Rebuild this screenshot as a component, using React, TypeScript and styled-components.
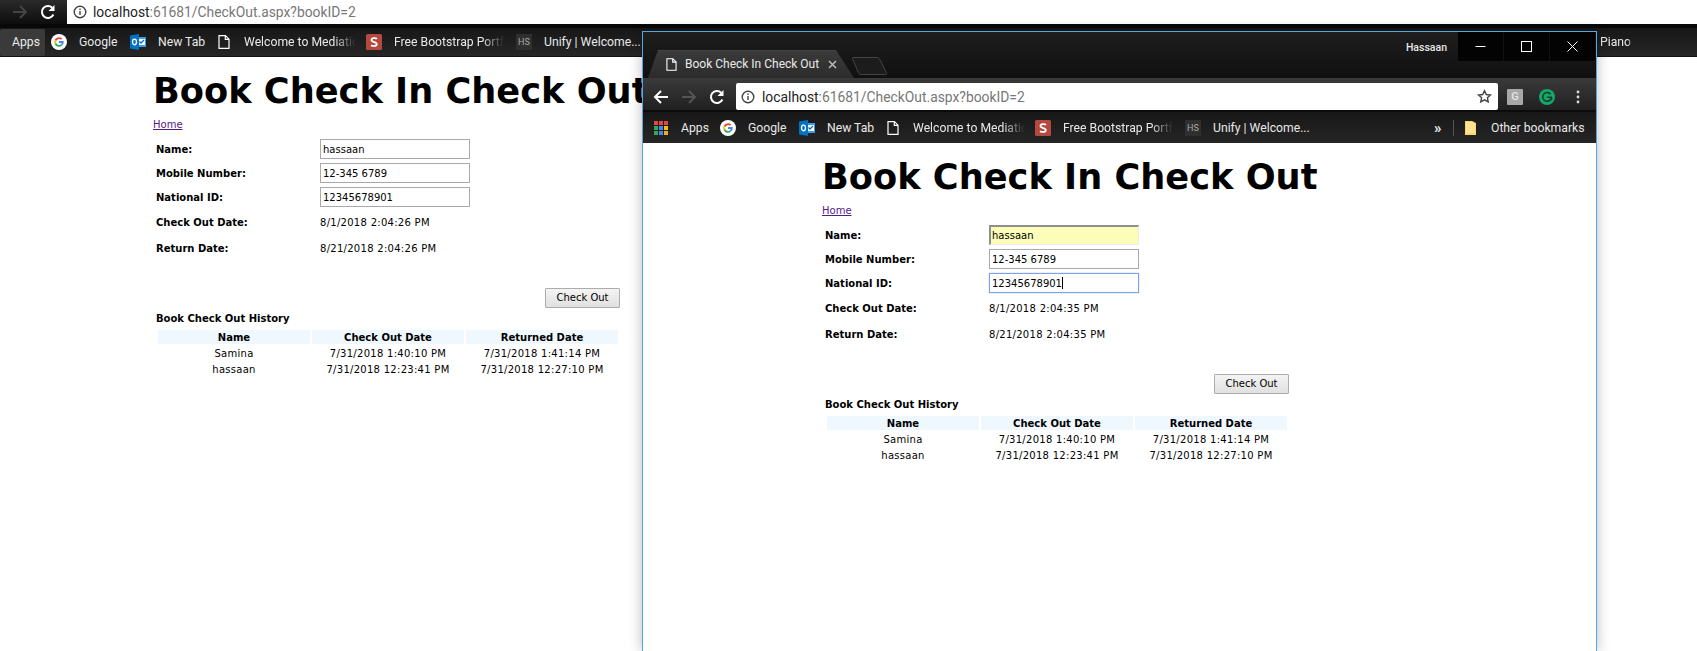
import React from "react";
import styled, { createGlobalStyle, css } from "styled-components";

const Global = createGlobalStyle`
  html, body { margin: 0; padding: 0; background: #fff; overflow: hidden; }
  #root { width: 1697px; height: 651px; }
`;

const uiFont = `Roboto, "Noto Sans", sans-serif`;
const pageFont = `"DejaVu Sans", Verdana, sans-serif`;

const Desktop = styled.div`
  position: relative;
  width: 1697px;
  height: 651px;
  overflow: hidden;
  background: #fff;
  display: flex;
  flex-direction: column;
`;

const BackToolbar = styled.div`
  display: flex;
  height: 24px;
  flex: none;
`;
const BackNav = styled.div`
  width: 67px;
  flex: none;
  display: flex;
  align-items: center;
  padding-left: 12px;
  gap: 12px;
  box-sizing: border-box;
  background: linear-gradient(#2a2a2a, #0d0d0d);
`;
const UrlBar = styled.div<{ $rounded?: boolean }>`
  flex: 1;
  background: #fff;
  display: flex;
  align-items: center;
  padding-left: 6px;
  gap: 6px;
  font: 13.85px/24px ${uiFont};
  white-space: nowrap;
  box-sizing: border-box;
  ${(p) => p.$rounded && css`border-radius: 2px; height: 27px; padding-left: 5px; padding-right: 1px; gap: 7px;`}
`;
const Host = styled.span`color: #222;`;
const Rest = styled.span`color: #777;`;
const Star = styled.span`margin-left: auto; display: flex; padding-right: 5px;`;

const Bookmarks = styled.div<{ $h: number; $pad: number }>`
  height: ${(p) => p.$h}px;
  flex: none;
  display: flex;
  align-items: center;
  padding-left: ${(p) => p.$pad}px;
  box-sizing: border-box;
  background: linear-gradient(#171717, #262626);
  color: #e8e8e8;
  font: 12.2px/20px ${uiFont};
  white-space: nowrap;
`;
const BackBookmarks = styled(Bookmarks)`
  border-top: 4px solid #080808;
  border-bottom: 1px solid #111;
`;
const BookmarkItem = styled.div<{ $w: number; $active?: boolean }>`
  width: ${(p) => p.$w}px;
  flex: none;
  display: flex;
  align-items: center;
  height: 27px;
  overflow: hidden;
  ${(p) => p.$active && css`background: #3a3a3a; border-radius: 2px; padding-left: 12px; box-sizing: border-box;`}
`;
const IconSlot = styled.span<{ $w: number }>`
  width: ${(p) => p.$w}px;
  flex: none;
  display: flex;
  align-items: center;
`;
const Faded = styled.span<{ $w: number }>`
  display: block;
  width: ${(p) => p.$w}px;
  overflow: hidden;
  -webkit-mask-image: linear-gradient(to right, #000 80%, transparent);
  mask-image: linear-gradient(to right, #000 80%, transparent);
`;
const Spacer = styled.div`flex: 1;`;
const Divider = styled.div`
  width: 1px;
  height: 16px;
  background: #555;
  margin: 0 11px 0 10px;
  flex: none;
`;
const Chevrons = styled.span`
  font: bold 15px/16px ${uiFont};
  width: 9px;
  flex: none;
  color: #eee;
`;
const PianoSlot = styled.div`
  margin-left: 954px;
  flex: none;
`;

const Page = styled.div`
  flex: 1;
  background: #fff;
  font: 10px/14px ${pageFont};
  color: #000;
  overflow: hidden;
`;
const Content = styled.div<{ $left: number }>`
  margin-left: ${(p) => p.$left}px;
  width: 467px;
  padding-top: 12px;
`;
const Title = styled.h1`
  margin: 0;
  font: bold 35.2px/44px ${pageFont};
  white-space: nowrap;
`;
const HomeLink = styled.a`
  display: block;
  margin-top: 5px;
  color: #551a8b;
  text-decoration: underline;
`;
const Form = styled.div`
  margin-top: 5px;
  padding-left: 3px;
  display: grid;
  grid-template-columns: 164px 1fr;
  grid-template-rows: 24px 24px 24px 26px 26px;
  align-items: center;
`;
const Label = styled.div`
  font-weight: bold;
  padding-top: 2px;
  line-height: 12px;
`;
const DateValue = styled.div`
  letter-spacing: 0.28px;
  padding-top: 2px;
  line-height: 12px;
`;
const TextBox = styled.div<{ $mode?: "auto" | "focus" }>`
  width: 150px;
  height: 20px;
  box-sizing: border-box;
  border: 1px solid #a9a9a9;
  padding: 1px 0 0 2px;
  line-height: 17px;
  background: #fff;
  ${(p) =>
    p.$mode === "auto" &&
    css`
      background: #fbfdb9;
      border-width: 2px 1px 1px 2px;
      border-color: #8f8f8f #ededed #ededed #8f8f8f;
      line-height: 16px;
      padding-left: 1px;
    `}
  ${(p) =>
    p.$mode === "focus" &&
    css`
      border-color: #7da2e8;
      box-shadow: 0 0 1px #7da2e8;
    `}
`;
const Caret = styled.span`
  display: inline-block;
  width: 1px;
  height: 12px;
  background: #000;
  vertical-align: -2px;
`;
const ButtonRow = styled.div`
  display: flex;
  justify-content: flex-end;
  margin-top: 27px;
`;
const CheckOutButton = styled.button`
  width: 75px;
  height: 20px;
  box-sizing: border-box;
  border: 1px solid #acacac;
  border-radius: 1px;
  background: linear-gradient(#f4f4f4, #e0e0e0);
  font: 10px/14px ${pageFont};
  color: #000;
  padding: 0;
`;
const HistoryTitle = styled.div`
  margin: 5px 0 0 3px;
  height: 11px;
  line-height: 12px;
  font-weight: bold;
`;
const HistoryTable = styled.table`
  margin: 4px 0 0 3px;
  width: 464px;
  table-layout: fixed;
  border-collapse: separate;
  border-spacing: 2px;
  text-align: center;
`;
const Th = styled.th`
  background: #eff7ff;
  padding: 2px 0 0;
  font: bold 10px/12px ${pageFont};
`;
const Td = styled.td`
  padding: 2px 0 0;
  font: 10px/12px ${pageFont};
  letter-spacing: 0.28px;
`;

const Win = styled.div`
  position: absolute;
  left: 642px;
  top: 31px;
  width: 955px;
  height: 620px;
  box-sizing: border-box;
  border: 1px solid #5aa6dc;
  border-bottom: 0;
  display: flex;
  flex-direction: column;
  background: #111;
  box-shadow: 0 0 12px rgba(0, 0, 0, 0.28);
`;
const TitleStrip = styled.div`
  height: 46px;
  flex: none;
  background: linear-gradient(#1e1e1e, #101010);
  display: flex;
  align-items: flex-start;
  padding-left: 5px;
`;
const Tab = styled.div`
  margin-top: 18px;
  width: 206px;
  height: 28px;
  flex: none;
  box-sizing: border-box;
  background: linear-gradient(#4a4a4a 0, #3a3a3a 1px, #2c2c2c);
  clip-path: polygon(0 100%, 10px 0, 188px 0, 206px 100%);
  display: flex;
  align-items: center;
  padding-left: 18px;
  color: #eaeaea;
  font: 12px/20px ${uiFont};
  white-space: nowrap;
`;
const TabTitle = styled.span`
  margin-left: 8px;
  width: 143px;
`;
const NewTab = styled.svg`
  margin: 25px 0 0 -2px;
  flex: none;
`;
const UserName = styled.div`
  margin-left: auto;
  margin-top: 6px;
  margin-right: 11px;
  color: #e8e8e8;
  font: 500 10.5px/20px ${uiFont};
`;
const Controls = styled.div`
  display: flex;
  height: 29px;
  background: #030303;
`;
const Control = styled.div`
  width: 46px;
  display: flex;
  align-items: center;
  justify-content: center;
  border-right: 1px solid #111;
  box-sizing: border-box;
`;
const Toolbar = styled.div`
  height: 34px;
  flex: none;
  box-sizing: border-box;
  background: linear-gradient(#3a3a3a, #202020);
  border-bottom: 2px solid #0b0b0b;
  display: flex;
  align-items: center;
  padding: 5px 0 0 10px;
`;
const NavIcons = styled.div`
  width: 83px;
  flex: none;
  display: flex;
  align-items: center;
  gap: 12px;
`;
const WinUrl = styled(UrlBar)`
  flex: none;
  width: 762px;
`;
const Extensions = styled.div`
  display: flex;
  align-items: center;
  padding-left: 9px;
  gap: 16px;
`;
const Dots = styled.div`
  margin-left: 5px;
  display: flex;
`;
const GrayExt = styled.div`
  width: 16px;
  height: 16px;
  background: #a8a8a8;
  color: #e4e4e4;
  border-radius: 1px;
  font: 500 11px/16px ${uiFont};
  text-align: center;
`;

const Back = ({ color = "#fff" }: { color?: string }) => (
  <svg width="16" height="16" viewBox="0 0 16 16" fill="none" stroke={color} strokeWidth="2"><path d="M15 8H2M8 2 2 8l6 6" /></svg>
);
const Forward = ({ color = "#555" }: { color?: string }) => (
  <svg width="16" height="16" viewBox="0 0 16 16" fill="none" stroke={color} strokeWidth="2"><path d="M1 8h13M8 2l6 6-6 6" /></svg>
);
const Reload = () => (
  <svg width="16" height="16" viewBox="0 0 16 16" fill="none"><path d="M13.4 10.5A6 6 0 1 1 12.2 3.7" stroke="#fff" strokeWidth="2" /><path d="M14.5 1v6h-6z" fill="#fff" /></svg>
);
const Info = () => (
  <svg width="14" height="14" viewBox="0 0 14 14" fill="none" stroke="#444" strokeWidth="1.4"><circle cx="7" cy="7" r="5.8" /><path d="M7 6v4M7 3.5v1.4" /></svg>
);
const GoogleG = () => (
  <svg width="16" height="16" viewBox="0 0 16 16">
    <circle cx="8" cy="8" r="8" fill="#fff" />
    <path d="M8 3.2a4.8 4.8 0 0 1 3.3 1.3l-1.3 1.3A3 3 0 0 0 5.2 7L3.7 5.8A4.8 4.8 0 0 1 8 3.2z" fill="#ea4335" />
    <path d="M3.7 5.8 5.2 7a3 3 0 0 0 0 2L3.7 10.2a4.8 4.8 0 0 1 0-4.4z" fill="#fbbc05" />
    <path d="M3.7 10.2 5.2 9a3 3 0 0 0 4.5 1.5l1.4 1.1A4.8 4.8 0 0 1 3.7 10.2z" fill="#34a853" />
    <path d="M12.7 8c0-.3 0-.6-.1-.9H8v1.8h2.6a2.3 2.3 0 0 1-.9 1.6l1.4 1.1A4.7 4.7 0 0 0 12.7 8z" fill="#4285f4" />
  </svg>
);
const Grammarly = () => (
  <svg width="16" height="16" viewBox="0 0 16 16" fill="none">
    <circle cx="8" cy="8" r="8" fill="#15a66a" />
    <path d="M11.6 5.2A4.4 4.4 0 1 0 12.2 9.5" stroke="#0c3f2a" strokeWidth="1.6" />
    <path d="M8.200 8.300h4.300v3" stroke="#0c3f2a" strokeWidth="1.400" />
  </svg>
);
const Outlook = () => (
  <svg width="16" height="16" viewBox="0 0 16 16">
    <rect x="6" y="3" width="10" height="10" fill="#3d9be0" />
    <path d="M7 5h8v6H7z" fill="#fff" />
    <path d="M0 1.5 9 0v16L0 14.5z" fill="#0072c6" />
    <ellipse cx="4.5" cy="8" rx="2" ry="2.8" fill="none" stroke="#fff" strokeWidth="1.3" />
    <path d="m9.5 7.5 1.5 1.5 3-3" stroke="#0072c6" strokeWidth="1.3" fill="none" />
  </svg>
);
const Doc = ({ w = 12, h = 14 }: { w?: number; h?: number }) => (
  <svg width={w} height={h} viewBox="0 0 12 14" fill="none" stroke="#fff" strokeWidth="1.2"><path d="M1 .7h6.5L11 4.2v9.1H1zM7.3 .7v3.7H11" /></svg>
);
const SLogo = () => (
  <svg width="16" height="16" viewBox="0 0 16 16">
    <rect width="16" height="16" rx="1.5" fill="#b5483f" />
    <path d="M11 4.8C10 3.900 5.500 3.500 5.500 6c0 2.600 5.300 1.500 5.300 4.200 0 2.300-4.300 2-5.800 1" fill="none" stroke="#fff" strokeWidth="1.8" />
  </svg>
);
const HsBadge = styled.span`
  width: 16px;
  height: 16px;
  background: #2f2f2f;
  color: #aaa;
  font: 9px/16px ${uiFont};
  text-align: center;
  display: block;
`;
const AppsGrid = () => (
  <svg width="14" height="14" viewBox="0 0 14 14">
    {[
      ["#e8453c", "#e8453c", "#e8453c"],
      ["#34a853", "#4285f4", "#fbbc05"],
      ["#34a853", "#4285f4", "#f9a825"],
    ].map((row, y) =>
      row.map((c, x) => <rect key={`${x}${y}`} x={x * 5} y={y * 5} width="4" height="4" fill={c} />)
    )}
  </svg>
);
const Folder = () => (
  <svg width="11" height="14" viewBox="0 0 11 14"><path d="M0 0h7l4 2v12H0z" fill="#fbd66d" /><path d="M1 1h6l3 2v9H1z" fill="#fde293" /></svg>
);
const StarIcon = () => (
  <svg width="15" height="15" viewBox="0 0 16 16" fill="none" stroke="#444" strokeWidth="1.5"><path d="M8 1.8l1.900 4.100 4.500.5-3.300 3 .9 4.400L8 11.600l-4 2.200.9-4.400-3.300-3 4.500-.5z" /></svg>
);

const sharedBookmarks = (
  <>
    <BookmarkItem $w={28}><GoogleG /></BookmarkItem>
    <BookmarkItem $w={51}>Google</BookmarkItem>
    <BookmarkItem $w={88}><IconSlot $w={28}><Outlook /></IconSlot>New Tab</BookmarkItem>
    <BookmarkItem $w={148}><IconSlot $w={26}><Doc /></IconSlot><Faded $w={112}>Welcome to Mediation</Faded></BookmarkItem>
    <BookmarkItem $w={150}><IconSlot $w={28}><SLogo /></IconSlot><Faded $w={110}>Free Bootstrap Portfolio</Faded></BookmarkItem>
    <BookmarkItem $w={130}><IconSlot $w={28}><HsBadge>HS</HsBadge></IconSlot>Unify | Welcome...</BookmarkItem>
  </>
);

type Row = [string, string, string];
const history: Row[] = [
  ["Samina", "7/31/2018 1:40:10 PM", "7/31/2018 1:41:14 PM"],
  ["hassaan", "7/31/2018 12:23:41 PM", "7/31/2018 12:27:10 PM"],
];

const CheckOutPage = ({ left, time, live }: { left: number; time: string; live?: boolean }) => (
  <Content $left={left}>
    <Title>Book Check In Check Out</Title>
    <HomeLink href="#">Home</HomeLink>
    <Form>
      <Label>Name:</Label>
      <TextBox $mode={live ? "auto" : undefined}>hassaan</TextBox>
      <Label>Mobile Number:</Label>
      <TextBox>12-345 6789</TextBox>
      <Label>National ID:</Label>
      <TextBox $mode={live ? "focus" : undefined}>12345678901{live && <Caret />}</TextBox>
      <Label>Check Out Date:</Label>
      <DateValue>8/1/2018 {time}</DateValue>
      <Label>Return Date:</Label>
      <DateValue>8/21/2018 {time}</DateValue>
    </Form>
    <ButtonRow>
      <CheckOutButton>Check Out</CheckOutButton>
    </ButtonRow>
    <HistoryTitle>Book Check Out History</HistoryTitle>
    <HistoryTable>
      <thead>
        <tr><Th>Name</Th><Th>Check Out Date</Th><Th>Returned Date</Th></tr>
      </thead>
      <tbody>
        {history.map((r) => (
          <tr key={r[0]}>{r.map((c) => <Td key={c}>{c}</Td>)}</tr>
        ))}
      </tbody>
    </HistoryTable>
  </Content>
);

export default function App() {
  return (
    <Desktop>
      <Global />
      <BackToolbar>
        <BackNav><Forward color="#444" /><Reload /></BackNav>
        <UrlBar>
          <Info />
          <span><Host>localhost</Host><Rest>:61681/CheckOut.aspx?bookID=2</Rest></span>
        </UrlBar>
      </BackToolbar>
      <BackBookmarks $h={33} $pad={0}>
        <BookmarkItem $w={45} $active>Apps</BookmarkItem>
        <BookmarkItem $w={6} />
        {sharedBookmarks}
        <PianoSlot><Faded $w={34}>Piano</Faded></PianoSlot>
      </BackBookmarks>
      <Page>
        <CheckOutPage left={153} time="2:04:26 PM" />
      </Page>

      <Win>
        <TitleStrip>
          <Tab>
            <Doc w={11} h={13} />
            <TabTitle>Book Check In Check Out</TabTitle>
            <svg width="9" height="9" viewBox="0 0 9 9" stroke="#bbb" strokeWidth="1.5"><path d="M1 1l7 7M8 1 1 8" /></svg>
          </Tab>
          <NewTab width="36" height="18" viewBox="0 0 36 18">
            <path d="M1 .5h24c1 0 2 .5 2.500 1.500l7 14c.5 1 0 1.500-1 1.500H9c-1 0-2-.5-2.500-1.500L.5 1.500C.2.800.4.500 1 .5z" fill="#1c1c1c" stroke="#444" />
          </NewTab>
          <UserName>Hassaan</UserName>
          <Controls>
            <Control><svg width="11" height="11" viewBox="0 0 11 11" stroke="#fff"><path d="M.5 5.5h10" /></svg></Control>
            <Control><svg width="11" height="11" viewBox="0 0 11 11" stroke="#fff" fill="none"><rect x=".5" y=".5" width="10" height="10" /></svg></Control>
            <Control><svg width="11" height="11" viewBox="0 0 11 11" stroke="#fff"><path d="M.5.5l10 10M10.5.5l-10 10" /></svg></Control>
          </Controls>
        </TitleStrip>
        <Toolbar>
          <NavIcons><Back /><Forward /><Reload /></NavIcons>
          <WinUrl $rounded>
            <Info />
            <span><Host>localhost</Host><Rest>:61681/CheckOut.aspx?bookID=2</Rest></span>
            <Star><StarIcon /></Star>
          </WinUrl>
          <Extensions>
            <GrayExt>G</GrayExt>
            <Grammarly />
            <Dots>
              <svg width="4" height="14" viewBox="0 0 4 14" fill="#ddd"><circle cx="2" cy="2" r="1.4" /><circle cx="2" cy="7" r="1.4" /><circle cx="2" cy="12" r="1.4" /></svg>
            </Dots>
          </Extensions>
        </Toolbar>
        <Bookmarks $h={31} $pad={11}>
          <BookmarkItem $w={27}><AppsGrid /></BookmarkItem>
          <BookmarkItem $w={39}>Apps</BookmarkItem>
          {sharedBookmarks}
          <Spacer />
          <Chevrons>»</Chevrons>
          <Divider />
          <IconSlot $w={26}><Folder /></IconSlot>
          <BookmarkItem $w={105}>Other bookmarks</BookmarkItem>
        </Bookmarks>
        <Page>
          <CheckOutPage left={179} time="2:04:35 PM" live />
        </Page>
      </Win>
    </Desktop>
  );
}
